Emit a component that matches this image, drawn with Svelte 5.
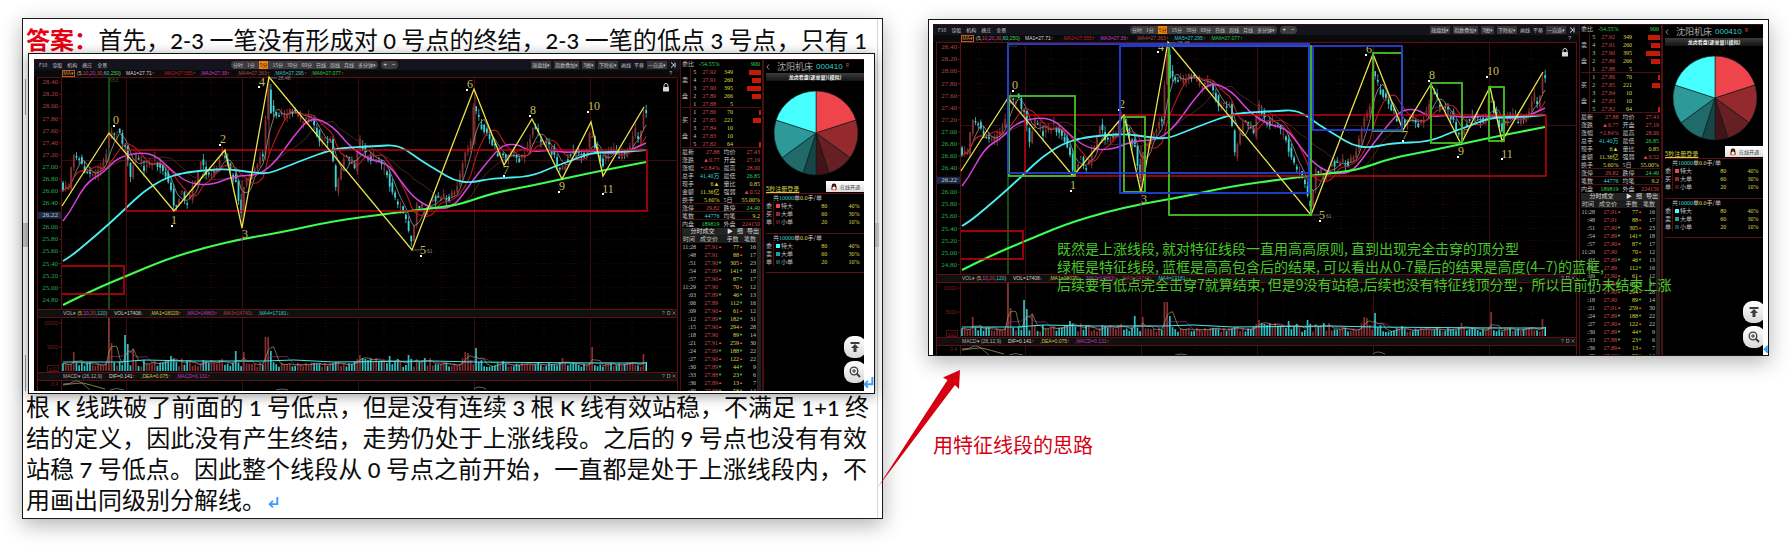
<script>
  const mix = (text) => text.split(/([0-9A-Za-z+\-]+)/).filter(Boolean);
  const isLatin = (part) => /^[0-9A-Za-z+\-]+$/.test(part);

  const lead = '首先，2-3 一笔没有形成对 0 号点的终结，2-3 一笔的低点 3 号点，只有 1';
  const lines = [
    '根 K 线跌破了前面的 1 号低点，但是没有连续 3 根 K 线有效站稳，不满足 1+1 终',
    '结的定义，因此没有产生终结，走势仍处于上涨线段。之后的 9 号点也没有有效',
    '站稳 7 号低点。因此整个线段从 0 号点之前开始，一直都是处于上涨线段内，不'
  ];

  const menus = ['F10', '诊股', '机构', '擒庄', '全景'];
  const periods = ['分时', '1分', '5分', '15分', '30分', '60分', '日线', '周线', '月线', '多分钟▾'];
  const tools = [
    ['操盘线▾', true], ['指数叠加▾', true], ['3图▾', true], ['下除权▾', true],
    ['画线', false], ['平移', false], ['一自选▾', true]
  ];
  const averages = [
    ['MA1=27.71', '#d8d8d8'], [',MA2=27.555', '#c01820'], [',MA3=27.39', '#c43ccc'],
    [',MA4=27.363', '#b04848'], [',MA5=27.295', '#38c4c8'], [',MA6=27.077', '#30c840']
  ];

  const prices = Array.from({ length: 19 }, (_, i) => ({ label: (28.4 - i * 0.2).toFixed(2), y: 23.3 + i * 12.08, i }));

  const path = [
    [28,128],[36,128],[40,92],[44,96],[52,112],[60,118],[72,103],[76,75],[86,74],[92,88],[98,115],[104,95],[112,110],[122,100],
    [132,115],[138,132],[142,148],[148,132],[152,145],[158,136],[168,104],[176,117],[184,105],[191,92],[196,108],[204,127],
    [208,162],[212,118],[218,118],[224,104],[230,95],[235,30],[238,50],[244,60],[256,52],[268,60],[278,58],[288,82],[298,80],
    [303,130],[312,95],[322,112],[326,80],[334,100],[345,98],[352,112],[362,142],[370,150],[378,184],[384,145],[392,150],
    [400,140],[412,138],[417,142],[426,122],[432,90],[438,85],[441,42],[446,62],[452,72],[462,90],[470,100],[480,95],[488,100],
    [496,88],[500,68],[510,85],[520,92],[528,116],[536,96],[545,92],[553,100],[558,70],[562,85],[570,106],[576,88],[588,98],
    [596,95],[602,72],[606,80],[612,50]
  ];
  const at = (x) => {
    for (let i = 1; i < path.length; i++) {
      if (x <= path[i][0]) {
        const [a, b] = path[i - 1];
        const [c, d] = path[i];
        return b + ((d - b) * (x - a)) / (c - a);
      }
    }
    return path[path.length - 1][1];
  };
  let seed = 7;
  const rand = () => {
    seed = (seed * 16807) % 2147483647;
    return seed / 2147483647;
  };

  const spikes = { 39: 19, 75: 55, 78: 28, 92: 36, 95: 27, 98: 21, 136: 15, 203: 20, 209: 19, 232: 34, 235: 34, 238: 20, 325: 16, 357: 15, 374: 16, 432: 19, 435: 18, 441: 23, 528: 13, 557: 24, 610: 17 };
  const candles = [];
  for (let x = 29; x < 613; x += 2.7) {
    const open = at(x - 1.3) + (rand() - 0.5) * 9;
    const close = at(x + 1.3) + (rand() - 0.5) * 9;
    const near = Object.keys(spikes).find((k) => Math.abs(k - x) < 1.35);
    const busy = (x > 85 && x < 190) || (x > 300 && x < 400) || (x > 426 && x < 470);
    candles.push({
      x, open, close,
      top: Math.min(open, close) - rand() * 6,
      bottom: Math.max(open, close) + rand() * 6,
      up: close < open,
      vol: near ? spikes[near] : 4 + rand() * (busy ? 9 : 5)
    });
  }
  const average = (n) =>
    candles.map((c, i) => {
      const part = candles.slice(Math.max(0, i - n + 1), i + 1);
      return `${c.x.toFixed(1)},${(part.reduce((s, p) => s + p.close, 0) / part.length).toFixed(1)}`;
    }).join(' ');
  const volAverage = (n) =>
    candles.map((c, i) => {
      const part = candles.slice(Math.max(0, i - n + 1), i + 1);
      return `${c.x.toFixed(1)},${(312 - part.reduce((s, p) => s + p.vol, 0) / part.length).toFixed(1)}`;
    }).join(' ');
  const grey = average(5);
  const red = average(10);
  const brown = average(26);
  const volFast = volAverage(4);
  const volSlow = volAverage(9);

  const smooth = (points) => {
    let d = `M${points[0]}`;
    for (let i = 1; i < points.length - 1; i++) {
      const [x, y] = points[i];
      const [nx, ny] = points[i + 1];
      d += ` Q${x},${y} ${(x + nx) / 2},${(y + ny) / 2}`;
    }
    return d + ` L${points[points.length - 1]}`;
  };
  const magenta = smooth([[29,162],[36,153],[46,134],[56,121],[69,114],[84,98],[109,93],[124,98],[139,113],[156,125],[179,126],[199,117],[226,116],[243,101],[259,78],[277,57],[299,67],[316,88],[336,101],[353,104],[366,121],[379,138],[396,149],[412,150],[423,144],[439,121],[459,96],[469,86],[484,85],[496,93],[516,91],[533,94],[555,91],[573,95],[593,93],[612,84]]);
  const cyan = smooth([[29,202],[36,198],[53,184],[75,165],[92,149],[109,133],[129,120],[148,114],[173,111],[193,110],[216,113],[233,115],[249,109],[269,101],[299,90],[323,88],[345,87],[360,86],[371,90],[386,101],[406,113],[419,121],[436,124],[459,119],[496,118],[519,108],[539,101],[556,94],[575,93],[600,92],[612,91]]);
  const green = smooth([[29,246],[41,240],[66,228],[90,218],[133,200],[173,188],[208,180],[249,173],[299,162],[359,154],[416,147],[430,144],[459,134],[496,127],[528,120],[566,112],[612,103]]);
  const strokes = '28,147 75,74 140,152 191,91 208,169 235,18 378,191 440,30 470,106 498,60 528,120 557,63 569,117 610,48';

  const marks = [
    ['0',82,65,80,67],['1',140,165,138,167],['2',189,84,186,86],['3',211,179,208,180],['4',228,27,225,28],['5',389,195,387,197],
    ['6',436,29,433,31],['7',472,115,470,117],['8',499,55,496,57],['9',528,131,525,133],['10',560,51,554,53],['11',574,134,569,135]
  ];

  const book = [
    ['', 5, '27.92', 349, 12], ['卖', 4, '27.91', 260, 9], ['', 3, '27.90', 395, 14], ['盘', 2, '27.89', 266, 9], ['', 1, '27.88', 5, 0],
    ['', 1, '27.86', 70, 2], ['买', 2, '27.85', 221, 8], ['', 3, '27.84', 10, 0], ['盘', 4, '27.83', 10, 0], ['', 5, '27.82', 64, 2]
  ];
  const facts = [
    ['最新', '27.88', 'r', '均价', '27.43', 'r'], ['涨跌', '▲0.77', 'r', '开盘', '27.19', 'r'],
    ['涨幅', '+2.84%', 'r', '最高', '28.00', 'r'], ['总手', '41.40万', 'c', '最低', '26.85', 'g'],
    ['现手', '6▲', 'y', '量比', '0.85', 'y'], ['金额', '11.36亿', 'y', '强弱', '▲0.52', 'r'],
    ['换手', '5.60%', 'y', '5日', '55.00%', 'y'], ['涨停', '29.82', 'r', '跌停', '24.40', 'g'],
    ['笔数', '44776', 'c', '均笔', '9.2', 'y'], ['内盘', '189819', 'g', '外盘', '224150', 'r']
  ];
  const trades = [
    ['11:28', '27.91', 'u', 77, 'u', 16], [':48', '27.91', '', 88, 'u', 17], [':51', '27.90', 'd', 305, 'u', 23],
    [':54', '27.89', 'd', 141, 'd', 18], [':57', '27.90', 'u', 87, 'd', 17], ['11:29', '27.90', '', 70, 'u', 12],
    [':03', '27.89', 'd', 46, 'd', 13], [':06', '27.89', '', 112, 'd', 16], [':09', '27.90', 'u', 61, 'u', 12],
    [':12', '27.89', 'd', 182, 'd', 31], [':15', '27.90', 'u', 294, 'u', 28], [':18', '27.90', '', 89, 'd', 14],
    [':21', '27.91', 'u', 259, 'u', 30], [':24', '27.89', 'd', 188, 'd', 22], [':27', '27.90', 'u', 122, 'u', 22],
    [':30', '27.89', 'd', 44, 'd', 9], [':33', '27.88', 'd', 23, 'd', 6], [':36', '27.89', 'u', 13, 'u', 7],
    [':39', '27.88', 'd', 58, 'd', 14]
  ];
  const arrow = { u: '▲', d: '▼', '': '' };

  const slices = [
    [0, 72, '#f0444c'], [72, 126, '#942a2e'], [126, 162, '#662024'], [162, 180, '#401418'],
    [180, 198, '#174646'], [198, 234, '#216a6a'], [234, 288, '#2e9999'], [288, 360, '#48ffff']
  ].map(([a, b, fill]) => {
    const p = (deg) => [53 + 42 * Math.sin((deg * Math.PI) / 180), 52 - 42 * Math.cos((deg * Math.PI) / 180)].map((n) => n.toFixed(2));
    return { d: `M53,52 L${p(a)} A42,42 0 0 1 ${p(b)} Z`, fill };
  });
  const orders = [
    { side: ['委', '买', '单'], tint: ['#f0444c', '#942a2e', '#481418'] },
    { side: ['委', '卖', '单'], tint: ['#48ffff', '#2e9999', '#174646'] }
  ];
  const sizes = [['特大', 80, '40%'], ['大单', 60, '30%'], ['小单', 20, '10%']];

  const greenBoxes = [[76,72,66,80],[191,93,21,75],[236,22,142,169],[440,29,29,78],[498,59,31,60],[556,63,15,54]];
  const blueBoxes = [[75,20,301,129],[187,22,189,147],[380,22,89,84]];
  const notes = [
    '既然是上涨线段, 就对特征线段一直用高高原则, 直到出现完全击穿的顶分型',
    '绿框是特征线段, 蓝框是高高包含后的结果, 可以看出从0-7最后的结果是高度(4–7)的蓝框,',
    '后续要有低点完全击穿7就算结束, 但是9没有站稳,后续也没有特征线顶分型，所以目前仍未结束上涨'
  ];
</script>

{#snippet mixed(text)}{#each mix(text) as part}{#if isLatin(part)}<span class="latin">{part}</span>{:else}{part}{/if}{/each}{/snippet}

{#snippet returnMark()}
  <svg class="return" viewBox="0 0 10 12" aria-hidden="true"><path d="M8.500 1v6.500H2M4.500 4.500L1.500 7.500l3 3" fill="none" stroke="#409cff" stroke-width="1.8" /></svg>
{/snippet}

{#snippet terminal(annotated)}
  <div class="terminal">
    <section class="main">
      <div class="toolbar">
        <nav class="menus">{#each menus as m}<button>{m}</button>{/each}</nav>
        <div class="pill periods">{#each periods as p}<button class:active={p === '5分'}>{p}</button>{/each}</div>
        <div class="pill zoomers"><button>+</button><button>−</button></div>
        <div class="tools">
          {#each tools as [t, boxed]}<button class:boxed>{t}</button>{/each}
          <button class="end" aria-label="collapse"><svg viewBox="0 0 6 6"><path d="M1 .5L4 3L1 5.500M5 .5v5" fill="none" stroke="#ddd" stroke-width="1" /></svg></button>
        </div>
      </div>
      <div class="averages">
        <button class="ma">MA▾</button>
        <span class="params">(5,<i class="r">10</i>,<i class="m">20</i>,<i class="r">30</i>,<i class="c">60</i>,<i class="g">250</i>)</span>
        {#each averages as [t, color]}<span class="avg" style:color>{t}<b>↑</b></span>{/each}
        <span class="help">?</span>
      </div>
      <svg class="chart" viewBox="0 18 646 314">
        <g fill="none" stroke="#240808" stroke-width="1" stroke-dasharray="1 2">
          {#each prices as p}<path d="M28 {p.y}H643" />{/each}
          {#each [46, 118, 148, 177, 263, 292, 350, 379, 408, 452, 481, 510, 540, 569, 598] as x}<path d="M{x} 18V332" />{/each}
          <path d="M28 264H643M28 288H643" />
        </g>
        <g fill="none" stroke="#3c0c10" stroke-width="1">
          {#each [92.500, 208.500, 324.500, 440.500, 556.500] as x}<path d="M{x} 18V332" />{/each}
          <path d="M28 101.500H643" />
        </g>
        <g fill="none" stroke="#5c1014" stroke-width="1">
          <path d="M3.500 18.500H643.500V332M3.500 18V332M27.500 18V332" />
          {#each prices as p}<path d="M25 {p.y}h3" />{/each}
          <path d="M25 264h3M25 288h3" />
        </g>
        <path d="M75 18V250M75 258V312" stroke="#125010" stroke-width="2" />
        {#each prices as p}
          {#if p.i === 11}
            <rect x="4" y={p.y - 3.500} width="23" height="7" fill="#1c2850" />
            <text x="24" y={p.y + 2} text-anchor="end" class="axis" fill="#c8d0a0">26.22</text>
          {:else}
            <text x="24" y={p.y + 2} text-anchor="end" class="axis" fill={p.i < 7 ? '#b84444' : '#28b04c'}>{p.label}</text>
          {/if}
        {/each}
        {#each candles as c}
          <path d="M{c.x} {c.top}V{c.bottom}" stroke={c.up ? '#9c3c3c' : '#3cc8cc'} stroke-width="0.8" />
          <rect x={c.x - 0.9} y={Math.min(c.open, c.close)} width="1.8" height={Math.max(1.500, Math.abs(c.open - c.close))} fill={c.up ? '#843030' : '#3cd4d8'} />
          <rect x={c.x - 0.9} y={312 - c.vol} width="1.7" height={c.vol} fill={c.up ? '#843034' : '#30c0c4'} />
        {/each}
        <path d="M235 18V95M441 32V85M208 122V168" stroke="#8c3434" stroke-width="1" />
        <g fill="none">
          <polyline points={brown} stroke="#542828" stroke-width="0.9" />
          <polyline points={grey} stroke="#989898" stroke-width="0.8" />
          <polyline points={red} stroke="#c01820" stroke-width="1.1" />
          <path d={magenta} stroke="#d444dc" stroke-width="1.500" />
          <path d={cyan} stroke="#48f0f4" stroke-width="1.800" />
          <path d={green} stroke="#40fc50" stroke-width="2.200" />
          <rect x="92" y="91" width="521" height="61" stroke="#d0040c" stroke-width="1.400" />
          <path d="M28 207H90V235H28" stroke="#d0040c" stroke-width="1.400" />
          <polyline points={strokes} stroke="#ece44c" stroke-width="1.300" />
        </g>
        {#each marks as [n, x, y, dx, dy]}
          <text {x} {y} text-anchor="middle" class="mark">{n}</text>
          <rect x={dx - 1} y={dy - 1} width="2" height="2" fill={n === '3' ? '#b050a0' : '#fff'} />
        {/each}
        <text x="76" y="23" class="tiny" fill="#186018">953</text>
        <path d="M236 19h7M379 191h8" stroke="#888" stroke-width="0.7" />
        <text x="244" y="21" class="tiny" fill="#888">28.48</text>
        <text x="393" y="194" class="tiny" fill="#888">61</text>
        <g fill="#d8d8d8"><rect x="629" y="28" width="6" height="4.500" rx="0.6" /><path d="M630 28v-1.500a2 2 0 0 1 4 0V28" fill="none" stroke="#d8d8d8" stroke-width="1" /></g>

        <rect x="4" y="250" width="639" height="8" fill="#101010" />
        <path d="M4 250.500H643M4 258.500H643M4 313.500H643M4 321.500H643" stroke="#5c1014" />
        <text x="29" y="256" class="small" fill="#b0b0b0">VOL▾ (<tspan fill="#d0d040">5</tspan>,<tspan fill="#c43ccc">10</tspan>,<tspan fill="#b04848">20</tspan>,<tspan fill="#38c4c8">120</tspan>)</text>
        <text x="80" y="256" class="small" fill="#d0d0d0">VOL=17408<tspan fill="#38c4c8">↓</tspan></text>
        <text x="116" y="256" class="small" fill="#c8c840">,MA1=18029<tspan fill="#e04040">↑</tspan></text>
        <text x="152" y="256" class="small" fill="#b43cbc">,MA2=14863<tspan fill="#e04040">↑</tspan></text>
        <text x="188" y="256" class="small" fill="#a84040">,MA3=14743<tspan fill="#38c4c8">↓</tspan></text>
        <text x="224" y="256" class="small" fill="#38c4c8">,MA4=17181↓</text>
        <text x="24" y="266" text-anchor="end" class="small" fill="#782020">10000</text>
        <text x="24" y="290" text-anchor="end" class="small" fill="#782020">5000</text>
        <rect x="13.500" y="306.500" width="11" height="6" fill="none" stroke="#501014" />
        <text x="23" y="312" text-anchor="end" class="small" fill="#782020">x10</text>
        <polyline points={volSlow} fill="none" stroke="#a040a0" stroke-width="0.6" />
        <polyline points={volFast} fill="none" stroke="#b8b468" stroke-width="0.6" />
        <path d="M29 303H85L110 301L160 302H230L260 301L300 303L400 302L440 303L560 304H612" fill="none" stroke="#48e8ec" stroke-width="1" />
        <path d="M612.500 303V312" stroke="#48e8ec" />
        <rect x="4" y="314" width="639" height="7" fill="#101010" />
        <text x="29" y="319" class="small" fill="#b0b0b0">MACD▾ (26,12,9)</text>
        <text x="75" y="319" class="small" fill="#d8d8d8">DIF=0.141<tspan fill="#e04040">↑</tspan></text>
        <text x="107" y="319" class="small" fill="#c8c840">,DEA=0.075<tspan fill="#e04040">↑</tspan></text>
        <text x="142" y="319" class="small" fill="#b43cbc">,MACD=0.131<tspan fill="#e04040">↑</tspan></text>
        <text x="24" y="327" text-anchor="end" class="small" fill="#782020">0.4</text>
        <path d="M29 325q8 0 12-3q4-1 8 3l7 6M76 331q6-3 14 0M242 331q6-2 12 0M440 330q4-4 12 0" fill="none" stroke="#909090" stroke-width="0.7" />
        <path d="M29 326q14-2 20-2q8 2 22 6" fill="none" stroke="#b8b468" stroke-width="0.7" />
        {#each [256, 319] as y}
          <text x="628" {y} class="small" fill="#909090">?</text>
          <rect x="633.500" y={y - 3.500} width="2.500" height="3" fill="none" stroke="#909090" stroke-width="0.6" />
          <path d="M638.500 {y - 3.500}l3 3m0-3l-3 3" stroke="#909090" stroke-width="0.6" />
        {/each}
      </svg>
    </section>

    <section class="quotes">
      <div class="ratio"><span>委比</span><span class="g">-54.55%</span><span class="g">900</span></div>
      <table class="book">
        <tbody>
          {#each book as [side, level, price, amount, bar], i}
            <tr class:split={i === 5}>
              <th>{side}</th><td class="level">{level}</td><td class="r">{price}</td><td class="y">{amount}</td>
              <td class="depth"><i style:width="{bar}px"></i></td>
            </tr>
          {/each}
        </tbody>
      </table>
      <table class="facts">
        <tbody>
          {#each facts as [a, b, bc, c, d, dc], i}
            <tr class:ruled={i === 0 || i > 6}><th>{a}</th><td class={bc}>{b}</td><th>{c}</th><td class={dc}>{d}</td></tr>
          {/each}
        </tbody>
      </table>
      <div class="dealhead"><span>分时成交</span><button>▶</button><button>细</button><button>导出</button></div>
      <table class="deals">
        <thead><tr><th>时间</th><th>成交价</th><th>手数</th><th>笔数</th></tr></thead>
        <tbody>
          {#each trades as [time, price, pd, amount, ad, count]}
            <tr>
              <td>{time}</td>
              <td class="r">{price}<b class={pd}>{arrow[pd]}</b></td>
              <td class="y">{amount}<b class={ad}>{arrow[ad]}</b></td>
              <td>{count}</td>
            </tr>
          {/each}
        </tbody>
      </table>
    </section>

    <section class="side">
      <header><button class="back" aria-label="back"><svg viewBox="0 0 4 6"><path d="M3 .5L1 3l2 2.500" fill="none" stroke="#aaa" stroke-width=".8" /></svg></button><span>沈阳机床</span><span class="code">000410</span><sup>R</sup></header>
      <h3>龙虎看盘(逐单量)(模拟)</h3>
      <svg class="pie" viewBox="0 0 101 100">
        {#each slices as s}<path d={s.d} fill={s.fill} stroke="#0a1c1c" stroke-width="0.6" />{/each}
      </svg>
      <div class="login">
        <a href="#login">5秒注册登录</a>
        <button>
          <svg viewBox="0 0 8 8"><ellipse cx="4" cy="3.500" rx="2.300" ry="3" fill="#111" /><ellipse cx="4" cy="5.500" rx="3" ry="1.800" fill="#d83018" /><ellipse cx="4" cy="5.300" rx="1.500" ry="1.500" fill="#fff" /><ellipse cx="4" cy="3" rx="1.200" ry=".6" fill="#f0a020" /></svg>
          在线开通
        </button>
      </div>
      {#each orders as o}
        <div class="orders">
          <p>共<i class="c">10000</i>单<i class="y">0.0</i>手/单</p>
          <table>
            <tbody>
              {#each sizes as [name, n, pct], i}
                <tr><th>{o.side[i]}</th><td class="swatch"><i style:background={o.tint[i]}></i></td><td class="name">{name}</td><td class="y">{n}</td><td class="y">{pct}</td></tr>
              {/each}
            </tbody>
          </table>
        </div>
      {/each}
    </section>

    <div class="floats">
      <button aria-label="top"><svg viewBox="0 0 12 12"><path d="M1.500 1h9v2h-9zM6 3l4 4H7.500v4h-3V7H2z" fill="#3c3c3c" /></svg></button>
      <button aria-label="zoom"><svg viewBox="0 0 12 12"><circle cx="5" cy="5" r="3.800" fill="none" stroke="#3c3c3c" stroke-width="1.300" /><path d="M3 5h4M5 3v4" stroke="#3c3c3c" /><path d="M7.800 7.800L11 11" stroke="#3c3c3c" stroke-width="2" /></svg></button>
    </div>

    {#if annotated}
      <svg class="overlay" viewBox="0 0 830 332">
        <g fill="none" stroke="#48c028" stroke-width="1.800">{#each greenBoxes as [x, y, w, h]}<rect {x} {y} width={w} height={h} />{/each}</g>
        <g fill="none" stroke="#2440d8" stroke-width="1.800">{#each blueBoxes as [x, y, w, h]}<rect {x} {y} width={w} height={h} />{/each}</g>
        {#each notes as note, i}<text x="124" y={230 + i * 18} class="note">{note}</text>{/each}
      </svg>
    {/if}
  </div>
{/snippet}

<main>
  <article class="document">
    <p class="line full"><strong>答案：</strong>{@render mixed(lead)}</p>
    <figure class="embedded">
      {@render terminal(false)}
      {@render returnMark()}
    </figure>
    {#each lines as l}<p class="line full">{@render mixed(l)}</p>{/each}
    <p class="line">用画出同级别分解线。{@render returnMark()}</p>
  </article>

  <section class="idea">
    <figure class="shot">
      {@render terminal(true)}
      {@render returnMark()}
    </figure>
    <p class="caption">用特征线段的思路</p>
    <svg class="pointer" viewBox="0 0 84 118" aria-hidden="true"><path d="M0 117L69.500 10L65 7.500L82 0L81 19L77 15z" fill="#d40012" /></svg>
  </section>
</main>

<style>
  :global(body) { background: #fff; }
  * { box-sizing: border-box; }
  main {
    display: grid;
    grid-template-columns: minmax(0, 861fr) minmax(0, 841fr);
    gap: 45px;
    align-items: start;
    padding: 18px 22px 26px;
    font-family: 'Noto Sans CJK SC', sans-serif;
    color: #0c0c0c;
  }
  figure, p, h3 { margin: 0; }
  button { font: inherit; color: inherit; background: none; border: 0; padding: 0; margin: 0; line-height: inherit; }
  i { font-style: normal; }
  .document {
    border: 1px solid #1c1c1c;
    padding: 4px 0 4px;
    box-shadow: 0 6px 20px rgba(0, 0, 0, 0.3);
    background:
      linear-gradient(#9a9a9a, #9a9a9a) 2px 60px / 1px 36px no-repeat,
      linear-gradient(#9a9a9a, #9a9a9a) 2px 336px / 1px 36px no-repeat,
      linear-gradient(#c8c8c8, #c8c8c8) 0 204px / 5px 24px no-repeat,
      linear-gradient(#d4d4d4, #d4d4d4) 852px 204px / 4px 24px no-repeat,
      linear-gradient(#d8d8d8, #d8d8d8) calc(100% - 4px) 0 / 1px 100% no-repeat,
      #fff;
  }
  .line { height: 31px; line-height: 31px; font-size: 24px; padding: 0 15px 0 3px; white-space: nowrap; }
  .full { text-align: justify; text-align-last: justify; }
  .line strong { color: #e60012; font-weight: 700; }
  .latin { font-family: Lato, sans-serif; font-size: 22px; font-weight: 500; }
  .line .return { width: 11px; height: 13px; margin-left: 2px; }
  .embedded {
    position: relative;
    margin: -1px 7px -4px 5px;
    padding: 5px 10px 2px 5px;
    border: 1px solid #141414;
    background: #fff;
    box-shadow: 0 2px 12px rgba(0, 0, 0, 0.4);
    overflow: hidden;
  }
  figure > .return { position: absolute; right: 0; bottom: 3px; width: 11px; height: 15px; }
  .idea { position: relative; padding-top: 1px; }
  .shot {
    position: relative;
    border: 1px solid #141414;
    padding: 4px 5px 0 4px;
    background: #fff;
    box-shadow: 0 6px 20px rgba(0, 0, 0, 0.3);
    overflow: hidden;
  }
  .shot > .return { right: -6px; bottom: 0; }
  .caption { margin: 74px 0 0 5px; font-size: 20px; line-height: 30px; color: #d40012; }
  .pointer { position: absolute; left: -50px; top: 352px; width: 84px; height: 118px; }

  .terminal {
    position: relative;
    display: grid;
    grid-template-columns: minmax(0, 646fr) minmax(0, 83fr) minmax(0, 101fr);
    height: 332px;
    overflow: hidden;
    background: #000;
    color: #c0c0c0;
    font-size: 6px;
    line-height: 8px;
    white-space: nowrap;
    border-top: 1px solid #400c10;
  }
  .shot .terminal { height: 331px; }
  .r { color: #d8484c; }
  .g { color: #30d84c; }
  .c { color: #38d0d4; }
  .y { color: #dcdc48; }
  .m { color: #c43ccc; }
  .main { min-width: 0; }
  .toolbar { position: relative; display: flex; align-items: center; height: 10px; padding-left: 5px; font-size: 5px; background: #14141e; }
  .menus { display: flex; gap: 5px; flex: 0 0 192px; }
  .pill { display: flex; align-items: center; height: 8px; border-radius: 4px; background: #3c3c40; }
  .periods { width: 147px; justify-content: space-between; padding: 0 2px; }
  .zoomers { margin-left: 3px; width: 17px; justify-content: space-around; color: #eee; font-size: 6px; }
  .active { background: #f08010; color: #402000; padding: 0 1px; }
  .tools { display: flex; gap: 3px; margin-left: auto; padding-right: 4px; }
  .boxed { background: #34343a; padding: 0 1px; }
  .end svg { display: block; width: 6px; height: 6px; }
  .averages { display: flex; align-items: center; height: 7px; padding-left: 28px; font: 5px/7px 'Liberation Sans', sans-serif; background: #0a0a0a; }
  .ma { width: 13px; height: 7px; line-height: 5px; border: 1px solid #a86428; color: #e08830; }
  .params { width: 51px; padding-left: 2px; }
  .avg { width: 37px; }
  .avg b { color: #e04040; font-weight: 400; }
  .help { margin-left: auto; padding-right: 8px; }
  .chart { display: block; width: 100%; height: 314px; overflow: visible; }
  .axis { font: 7px 'Liberation Serif', serif; }
  .small { font: 5px 'Liberation Sans', sans-serif; }
  .tiny { font: 5px 'Liberation Sans', sans-serif; }
  .mark { font: 12px 'Liberation Serif', serif; fill: #c4bc58; }

  table { border-collapse: collapse; table-layout: fixed; width: 100%; }
  th { font-weight: 400; text-align: left; }
  tr { height: 8px; }
  th, td { padding: 0; height: 8px; line-height: 8px; }
  .quotes { font-family: 'Liberation Serif', 'Noto Sans CJK SC', serif; border: 1px solid #4c1014; border-width: 0 1px; padding: 0 1px; overflow: hidden; }
  .ratio { display: flex; height: 8px; padding-right: 1px; }
  .ratio span:first-child { width: 17px; }
  .ratio span:last-child { margin-left: auto; }
  .book th { width: 8px; border-right: 1px solid #4c1014; }
  .book .level { width: 9px; text-align: center; }
  .book td.r { width: 17px; text-align: right; }
  .book td.y { width: 17px; text-align: right; }
  .book .split, .ruled { box-shadow: 0 -1px 0 #4c1014; }
  .depth i { display: block; height: 5px; margin-left: auto; background: #c41808; }
  .facts th { width: 16px; }
  .facts td { text-align: right; }
  .facts td:last-child { padding-right: 1px; }
  .facts th:nth-child(3) { width: 20px; padding-left: 4px; }
  .dealhead { display: flex; gap: 4px; height: 7px; line-height: 7px; padding-right: 2px; color: #ddd; background: #242424; }
  .dealhead span { flex: 1; text-align: center; }
  .dealhead button { height: 7px; line-height: 7px; }
  .deals { width: calc(100% - 4px); box-shadow: 4px 0 0 #202020; }
  .deals th { background: #1c1c1c; text-align: center; }
  .deals td { text-align: right; }
  .deals th:nth-child(1) { width: 14px; }
  .deals th:nth-child(2) { width: 26px; }
  .deals th:nth-child(3) { width: 21px; }
  .deals b { display: inline-block; width: 4px; height: 8px; vertical-align: top; font-size: 4px; line-height: 8px; font-weight: 400; }
  .deals td:last-child { padding-right: 1px; }
  .u { color: #f04848; }
  .d { color: #30e04c; }

  .side { min-width: 0; padding-left: 2px; overflow: hidden; border-left: 1px solid #4c1014; }
  .side header { display: flex; align-items: center; height: 13px; font-size: 9px; line-height: 12px; color: #a8a8a8; }
  .back { width: 11px; height: 6px; }
  .back svg { display: block; width: 4px; height: 6px; }
  .code { margin-left: 3px; font-family: 'Liberation Sans', sans-serif; font-size: 8px; color: #38c8cc; }
  sup { margin-left: 3px; font-size: 5px; line-height: 5px; color: #e04040; align-self: start; padding-top: 2px; }
  h3 { height: 8px; font-size: 5px; line-height: 8px; font-weight: 700; text-align: center; color: #eee; background: linear-gradient(#3c3c3c, #141414); }
  .pie { display: block; width: calc(100% + 3px); margin-left: -3px; height: 100px; }
  .login { display: flex; justify-content: space-between; align-items: flex-end; height: 12px; }
  .login a { color: #d0d048; line-height: 8px; }
  .login button { display: flex; align-items: center; gap: 2px; width: 38px; height: 11px; margin-bottom: 1px; padding-left: 4px; font-size: 5px; color: #444; background: linear-gradient(#fff, #ddd); }
  .login svg { width: 8px; height: 8px; }
  .orders { height: 40px; border-top: 1px solid #5c1014; }
  .orders:last-child { border-bottom: 1px solid #5c1014; }
  .orders p { height: 8px; padding-left: 7px; }
  .orders p i, .orders td.y { font-family: 'Liberation Serif', serif; }
  .orders th { width: 7px; border-right: 1px solid #4c1014; }
  .swatch { width: 8px; }
  .swatch i { display: block; width: 4px; height: 4px; margin-left: 2px; }
  .name { width: 18px; }
  .orders td.y { text-align: right; padding-right: 4px; }
  .floats { position: absolute; right: -2px; top: 276px; display: grid; gap: 3px; }
  .floats button { display: grid; place-items: center; width: 22px; height: 22px; border-radius: 9px; background: linear-gradient(#fff, #d8d8d8); }
  .floats svg { width: 12px; height: 12px; }
  .overlay { position: absolute; left: 0; top: -1px; width: 100%; height: 332px; }
  .note { font: 14px 'Noto Sans CJK SC', sans-serif; fill: #48c828; }
</style>
